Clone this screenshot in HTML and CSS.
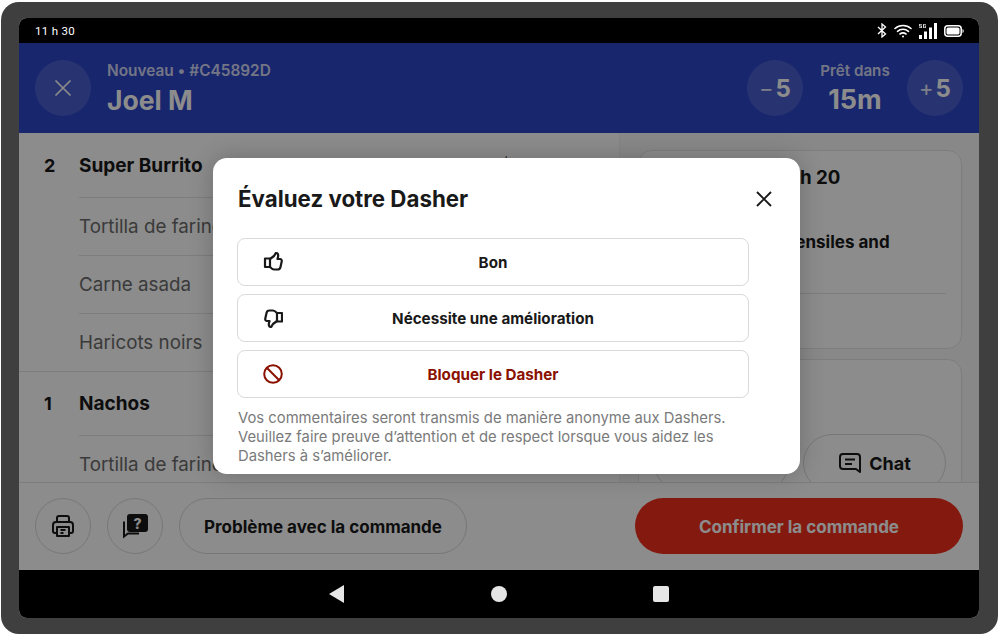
FILE: index.html
```html
<!DOCTYPE html>
<html lang="fr">
<head>
<meta charset="utf-8">
<title>Évaluez votre Dasher</title>
<link rel="stylesheet" href="styles.css">
</head>
<body>
<div class="device">
  <div class="screen">
    <div class="status">
      <span class="clock">11 h 30</span>
      <div class="status-icons">
        <svg width="10" height="15" viewBox="0 0 10 15" fill="none" stroke="#fff" stroke-width="1.3"><path d="M1 4l7.5 7L5 14V1l3.500 3L1 11"/></svg>
        <svg width="18" height="14" viewBox="0 0 18 14" fill="none" stroke="#fff" stroke-width="1.6" stroke-linecap="round"><path d="M1 4.500C5.500.5 12.500.5 17 4.500"/><path d="M3.500 7.300c3.200-2.700 7.800-2.700 11 0"/><path d="M6 10c1.800-1.300 4.200-1.300 6 0"/><circle cx="9" cy="12.500" r="1" fill="#fff" stroke="none"/></svg>
        <svg class="signal" width="18" height="16" viewBox="0 0 18 16" fill="#fff"><rect x="0" y="12" width="3" height="4"/><rect x="5" y="8.500" width="3" height="7.500"/><rect x="10" y="4.500" width="3" height="11.500"/><rect x="15" y="0" width="3" height="16"/><path d="M0 1h3v.8H1v.8h2V5H0v-.8h2v-.8H0zM4 1h3v.8H5v2.400h1.200V3.400h-.6v-.8H7V5H4z" opacity=".8"/></svg>
        <svg width="20" height="12" viewBox="0 0 20 12"><rect x=".8" y=".8" width="16.400" height="10.400" rx="3" fill="#000" stroke="#fff" stroke-width="1.500"/><rect x="2.500" y="2.500" width="13" height="7" rx="1.500" fill="#fff"/><path d="M18.500 4v4c.8-.3 1.200-1 1.200-2s-.4-1.700-1.200-2z" fill="#fff"/></svg>
      </div>
    </div>

    <header class="order-head">
      <button class="round-btn close-btn" aria-label="Fermer">
        <svg width="18" height="18" viewBox="0 0 18 18" fill="none" stroke="#fff" stroke-width="1.700"><path d="M1.500 1.500l15 15M16.500 1.500l-15 15"/></svg>
      </button>
      <div class="order-id">
        <div class="order-no">Nouveau • #C45892D</div>
        <div class="order-name">Joel M</div>
      </div>
      <button class="round-btn time-btn"><span class="sign">−</span>5</button>
      <div class="ready">
        <div class="ready-label">Prêt dans</div>
        <div class="ready-time">15m</div>
      </div>
      <button class="round-btn time-btn"><span class="sign">+</span>5</button>
    </header>

    <main class="content">
      <section class="items">
        <div class="item">
          <div class="item-row"><span class="qty">2</span><span class="item-name">Super Burrito</span><span class="price">12,50 $</span></div>
          <div class="mod">Tortilla de farine</div>
          <div class="mod">Carne asada</div>
          <div class="mod last">Haricots noirs</div>
        </div>
        <div class="item second">
          <div class="item-row"><span class="qty">1</span><span class="item-name">Nachos</span></div>
          <div class="mod">Tortilla de farine</div>
        </div>
      </section>
      <aside class="side">
        <div class="card info-card">
          <div class="info-title">Ramassage à 11 h 20</div>
          <div class="info-note">Please include utensiles and<br>napkins</div>
          <div class="info-foot"></div>
        </div>
        <div class="card dasher-card">
          <div class="contact-row">
            <button class="pill-btn small-pill" aria-label="Appeler"></button>
            <button class="pill-btn chat-pill">
              <svg width="24" height="22" viewBox="0 0 24 22" fill="none" stroke="#191919" stroke-width="2" stroke-linejoin="round"><path d="M5 2h14a3 3 0 0 1 3 3v15l-4-3H5a3 3 0 0 1-3-3V5a3 3 0 0 1 3-3z"/><path d="M7 7.500h10M7 12h7"/></svg>
              Chat
            </button>
          </div>
        </div>
      </aside>
    </main>

    <footer class="actions">
      <button class="round-btn outline-btn" aria-label="Imprimer">
        <svg width="24" height="24" viewBox="0 0 24 24" fill="none" stroke="#191919" stroke-width="2" stroke-linejoin="round"><path d="M6 8V4a2 2 0 0 1 2-2h8a2 2 0 0 1 2 2v4"/><path d="M6 19H4a2 2 0 0 1-2-2v-6a3 3 0 0 1 3-3h14a3 3 0 0 1 3 3v6a2 2 0 0 1-2 2h-2"/><path d="M6 13h12v9H6z"/><path d="M9.500 16h5M9.500 19h3"/></svg>
      </button>
      <button class="round-btn outline-btn" aria-label="Aide">
        <svg width="28" height="26" viewBox="0 0 28 26"><path d="M9 1h15a3 3 0 0 1 3 3v12a3 3 0 0 1-3 3h-15a3 3 0 0 1-3-3V4a3 3 0 0 1 3-3z" fill="#191919"/><path d="M3 8.500v15l4-3h11" fill="none" stroke="#191919" stroke-width="2"/><text x="16.500" y="15.500" class="q-mark">?</text></svg>
      </button>
      <button class="pill-btn issue-btn">Problème avec la commande</button>
      <button class="confirm-btn">Confirmer la commande</button>
    </footer>

    <nav class="android-nav">
      <svg width="15" height="18" viewBox="0 0 15 18"><path d="M15 0v18L0 9z" fill="#e6e6e6"/></svg>
      <span class="nav-home"></span>
      <span class="nav-recent"></span>
    </nav>

    <div class="scrim">
      <div class="modal" role="dialog">
        <div class="modal-head">
          <h1>Évaluez votre Dasher</h1>
          <svg class="modal-close" width="16" height="16" viewBox="0 0 16 16" fill="none" stroke="#191919" stroke-width="1.900"><path d="M1 1l14 14M15 1L1 15"/></svg>
        </div>
        <div class="rate-list">
          <button class="rate-btn">
            <svg width="20" height="20" viewBox="0 0 20 20" fill="none" stroke="#191919" stroke-width="2.200" stroke-linejoin="round" stroke-linecap="round"><path d="M2 6.500h5v8.500H2z"/><path d="M7 7l4-3c1-1 1-2.500 2-3 2 0 2.500 2 2 4l-.5 2h2.500c1.300 0 2 1.200 1.700 2.500L17.500 15c-.3 1.500-1.300 2.500-2.800 2.500h-3.700c-1.500 0-3-1.500-4-2.500"/></svg>
            <span>Bon</span>
          </button>
          <button class="rate-btn">
            <svg width="20" height="20" viewBox="0 0 20 20" fill="none" stroke="#191919" stroke-width="2.200" stroke-linejoin="round" stroke-linecap="round"><g transform="rotate(180 10 10) translate(-1 0)"><path d="M2 6.500h5v8.500H2z"/><path d="M7 7l4-3c1-1 1-2.500 2-3 2 0 2.500 2 2 4l-.5 2h2.500c1.300 0 2 1.200 1.700 2.500L17.500 15c-.3 1.500-1.300 2.500-2.800 2.500h-3.700c-1.500 0-3-1.500-4-2.500"/></g></svg>
            <span>Nécessite une amélioration</span>
          </button>
          <button class="rate-btn danger">
            <svg width="20" height="20" viewBox="0 0 20 20" fill="none" stroke="#8a1100" stroke-width="2"><circle cx="10" cy="10" r="8.800"/><path d="M3.800 3.800l12.400 12.400"/></svg>
            <span>Bloquer le Dasher</span>
          </button>
        </div>
        <p class="modal-note">Vos commentaires seront transmis de manière anonyme aux Dashers. Veuillez faire preuve d’attention et de respect lorsque vous aidez les Dashers à s’améliorer.</p>
      </div>
    </div>
  </div>
</div>
</body>
</html>
```

FILE: styles.css
```css
* { box-sizing: border-box; }
html, body { margin: 0; height: 100%; background: #fff; }
body { font-family: "Inter", "Liberation Sans", sans-serif; overflow: hidden; }
button { font-family: inherit; padding: 0; cursor: pointer; }

.device {
  width: 997px;
  height: 632px;
  margin: 2px 0 0 1px;
  padding: 16px 18px;
  background: #3f3f3f;
  border-radius: 18px;
}
.screen {
  position: relative;
  width: 960px;
  height: 600px;
  background: #fff;
  border-radius: 8px;
  overflow: hidden;
  display: flex;
  flex-direction: column;
}

.status {
  height: 25px;
  flex: none;
  background: #000;
  color: #fff;
  display: flex;
  align-items: center;
  justify-content: space-between;
  padding: 0 15px 0 17px;
  position: relative;
  z-index: 2;
}
.clock { font-family: "Roboto", sans-serif; font-size: 11.500px; letter-spacing: .3px; margin-left: -1px; padding-top: 1px; }
.status-icons { display: flex; align-items: center; gap: 7px; }

.order-head {
  height: 90px;
  flex: none;
  background: #2c45c8;
  color: #fff;
  display: flex;
  align-items: center;
  padding: 0 16px;
}
.round-btn {
  width: 56px;
  height: 56px;
  flex: none;
  border-radius: 50%;
  border: 0;
  background: rgba(255,255,255,.14);
  color: #fff;
  display: flex;
  align-items: center;
  justify-content: center;
}
.order-id { margin-left: 16px; flex: 1; padding-top: 4px; }
.order-no { font-size: 15.400px; font-weight: 600; line-height: 18px; color: rgba(255,255,255,.8); }
.order-name { font-size: 26.500px; font-weight: 700; line-height: 36px; margin-top: 2px; }
.time-btn { font-size: 24px; font-weight: 700; gap: 2px; }
.sign { font-weight: 400; font-size: 22px; opacity: .85; }
.ready { width: 104px; text-align: center; padding-top: 4px; }
.ready-label { font-size: 15.200px; font-weight: 600; line-height: 18px; color: rgba(255,255,255,.8); }
.ready-time { font-size: 27px; font-weight: 700; line-height: 36px; margin-top: 2px; }

.content { flex: 1; min-height: 0; display: flex; overflow: hidden; background: #fff; }
.items { width: 601px; flex: none; border-right: 1px solid #f1f1f1; }
.item { padding-left: 60px; }
.item-row { height: 64px; display: flex; align-items: center; position: relative; padding-right: 107px; }
.qty { position: absolute; left: -35px; font-size: 18px; font-weight: 700; color: #191919; }
.item-name { font-size: 19px; font-weight: 700; color: #191919; flex: 1; }
.price { font-size: 18px; font-weight: 600; color: #191919; }
.mod {
  height: 58px;
  border-top: 1px solid #e4e4e4;
  display: flex;
  align-items: center;
  font-size: 18.800px;
  color: #6b6b6b;
}
.second { border-top: 1px solid #e4e4e4; }
.second .item-row { height: 63px; padding-bottom: 1px; }

.side { flex: 1; padding: 17px 17px 0 18px; display: flex; flex-direction: column; gap: 10px; background: #f8f8f8; }
.card { border: 1px solid #e4e4e4; border-radius: 14px; padding: 0 15px; background: #fff; }
.info-card { height: 199px; flex: none; }
.info-title { font-size: 18.700px; font-weight: 700; color: #191919; margin-top: 15px; line-height: 24px; }
.info-note { font-size: 17px; font-weight: 700; color: #191919; margin-top: 40px; line-height: 24px; height: 63px; overflow: hidden; }
.info-foot { border-top: 1px solid #e4e4e4; }
.dasher-card { flex: none; height: 160px; padding-top: 74px; }
.contact-row { display: flex; gap: 14px; }
.pill-btn {
  height: 58px;
  border-radius: 29px;
  border: 1px solid #d9d9d9;
  background: transparent;
  color: #191919;
  font-weight: 700;
  font-size: 18px;
  display: flex;
  align-items: center;
  justify-content: center;
}
.small-pill { width: 135px; }
.chat-pill { width: 143px; gap: 7px; }

.actions {
  height: 88px;
  flex: none;
  background: #fff;
  border-top: 1px solid #e4e4e4;
  display: flex;
  align-items: center;
  padding: 0 16px 2px;
  gap: 16px;
}
.outline-btn { background: transparent; border: 1px solid #d9d9d9; }
.q-mark { font-size: 14px; font-weight: 800; fill: #fff; text-anchor: middle; font-family: "Inter", sans-serif; }
.issue-btn { width: 288px; height: 56px; border-radius: 28px; font-size: 17px; padding-top: 2px; }
.confirm-btn {
  margin-left: auto;
  width: 328px;
  height: 56px;
  border-radius: 28px;
  border: 0;
  background: #f0311c;
  color: #fff;
  font-size: 17px;
  font-weight: 700;
  padding-top: 2px;
}

.android-nav {
  height: 48px;
  flex: none;
  background: #000;
  display: flex;
  align-items: center;
  position: relative;
  z-index: 2;
  padding-left: 310px;
}
.nav-home { width: 16px; height: 16px; border-radius: 50%; background: #e6e6e6; margin-left: 147px; }
.nav-recent { width: 16px; height: 16px; border-radius: 2px; background: #e6e6e6; margin-left: 146px; }

.scrim {
  position: absolute;
  left: 0;
  right: 0;
  top: 25px;
  bottom: 48px;
  background: rgba(0,0,0,.45);
  z-index: 1;
}
.modal {
  position: absolute;
  left: 194px;
  top: 115px;
  width: 587px;
  height: 316px;
  background: #fff;
  border-radius: 14px;
  padding: 24px 24px 0;
  box-shadow: 0 0 24px rgba(0,0,0,.22);
}
.modal-head { display: flex; align-items: center; justify-content: space-between; padding: 0 4px 0 1px; height: 34px; }
.modal-head h1 { margin: 0; font-size: 22.300px; font-weight: 700; color: #191919; line-height: 34px; }
.rate-list { display: flex; flex-direction: column; gap: 8px; margin-top: 22px; width: 512px; }
.rate-btn {
  height: 48px;
  border: 1px solid #d9d9d9;
  border-radius: 8px;
  background: #fff;
  color: #191919;
  font-size: 15.200px;
  font-weight: 700;
  position: relative;
  display: flex;
  align-items: center;
  justify-content: center;
}
.rate-btn svg { position: absolute; left: 25px; top: 13px; }
.danger { color: #8a1100; }
.modal-note { margin: 10px 0 0 1px; width: 511px; font-size: 14.800px; line-height: 19px; color: #7a7a7a; padding-top: 1px; }
```
